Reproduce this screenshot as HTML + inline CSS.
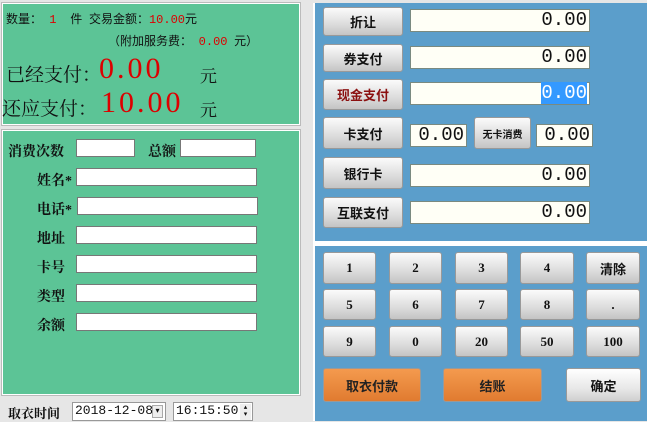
<!DOCTYPE html>
<html><head><meta charset="utf-8"><style>
*{margin:0;padding:0;box-sizing:border-box}
body{width:647px;height:421px;background:#e6e6e6;position:relative;overflow:hidden;font-family:"Liberation Serif","Noto Serif CJK SC",serif;font-size:13px;color:#111}
.a{position:absolute}
.g{background:#5cc496;border:1px solid #fff;box-shadow:0 0 0 1px #bbb}
.b{background:#5b9ecb}
.btn{position:absolute;background:linear-gradient(#fbfbfb,#dcdcdc 60%,#c4c4c4);border:1px solid #999;border-radius:3px;text-align:center;font-weight:bold;font-size:13px;font-family:"Liberation Serif","Noto Sans CJK SC",serif;display:flex;align-items:center;justify-content:center}
.in{position:absolute;background:#fffff6;border:1px solid #7a8a80;text-align:right;font-family:"Liberation Mono","Noto Sans CJK SC",monospace;font-size:19px;line-height:21px;padding-right:2px}
.w{position:absolute;background:#fff;border:1px solid #777}
.r{color:#d00}
.m{font-family:"Liberation Mono",monospace}
.big{font-family:"Liberation Serif",serif;font-size:30px;letter-spacing:3px}
.lb{position:absolute;font-weight:bold;font-size:14px;font-family:"Liberation Serif","Noto Serif CJK SC",serif}
.or{background:linear-gradient(#f49a4e,#e07b30);color:#222}
</style></head><body>
<div class="a g" style="left:2px;top:3px;width:298px;height:122px"></div>
<div class="a" style="left:6px;top:10px;font-size:12px;font-family:'Liberation Sans','Noto Sans CJK SC',sans-serif">数量：<span class="r m">&nbsp;1&nbsp;</span>&nbsp;&nbsp;件&nbsp;&nbsp;交易金额：<span class="r m">10.00</span>元</div>
<div class="a" style="left:108px;top:32px;font-size:12px;font-family:'Liberation Sans','Noto Sans CJK SC',sans-serif">（附加服务费：&nbsp;&nbsp;<span class="r m">0.00</span>&nbsp;&nbsp;元）</div>
<div class="a" style="left:6px;top:60px;font-size:19px">已经支付：</div>
<div class="a r big" style="left:99px;top:52px">0.00</div>
<div class="a" style="left:200px;top:62px;font-size:17px">元</div>
<div class="a" style="left:2px;top:94px;font-size:19px">还应支付：</div>
<div class="a r big" style="left:101px;top:86px">10.00</div>
<div class="a" style="left:200px;top:96px;font-size:17px">元</div>

<div class="a g" style="left:2px;top:130px;width:298px;height:265px"></div>
<div class="lb" style="left:8px;top:141px">消费次数</div>
<div class="w" style="left:76px;top:139px;width:59px;height:18px"></div>
<div class="lb" style="left:148px;top:141px">总额</div>
<div class="w" style="left:180px;top:139px;width:76px;height:18px"></div>
<div class="lb" style="left:37px;top:170px">姓名*</div><div class="w" style="left:76px;top:168px;width:181px;height:18px"></div>
<div class="lb" style="left:37px;top:199px">电话*</div><div class="w" style="left:77px;top:197px;width:181px;height:18px"></div>
<div class="lb" style="left:37px;top:228px">地址</div><div class="w" style="left:76px;top:226px;width:181px;height:18px"></div>
<div class="lb" style="left:37px;top:257px">卡号</div><div class="w" style="left:76px;top:255px;width:181px;height:18px"></div>
<div class="lb" style="left:37px;top:286px">类型</div><div class="w" style="left:76px;top:284px;width:181px;height:18px"></div>
<div class="lb" style="left:37px;top:315px">余额</div><div class="w" style="left:76px;top:313px;width:181px;height:18px"></div>

<div class="lb" style="left:8px;top:403px;font-size:13px">取衣时间</div>
<div class="w" style="left:72px;top:402px;width:94px;height:19px;border-color:#999;font-family:'Liberation Mono',monospace;font-size:13px;padding-left:2px">2018-12-08</div>
<div class="a" style="left:152px;top:405px;width:11px;height:13px;background:#eee;border:1px solid #aaa;font-size:8px;text-align:center">▾</div>
<div class="w" style="left:173px;top:402px;width:80px;height:19px;border-color:#999;font-family:'Liberation Mono',monospace;font-size:13px;padding-left:2px">16:15:50</div>
<div class="a" style="left:240px;top:404px;width:11px;height:16px;font-size:7px;line-height:7px;text-align:center;background:#eee">▴<br>▾</div>

<div class="a b" style="left:313px;top:3px;width:334px;height:238px;border-left:2px solid #fff"></div>
<div class="a" style="left:313px;top:241px;width:334px;height:5px;background:#fff"></div>
<div class="a b" style="left:313px;top:246px;width:334px;height:175px;border-left:2px solid #fff"></div>

<div class="btn" style="left:323px;top:7px;width:80px;height:29px">折让</div>
<div class="in" style="left:410px;top:9px;width:180px;height:23px">0.00</div>
<div class="btn" style="left:323px;top:44px;width:80px;height:28px">券支付</div>
<div class="in" style="left:410px;top:46px;width:180px;height:23px">0.00</div>
<div class="btn" style="left:323px;top:79px;width:80px;height:31px;color:#8b1010">现金支付</div>
<div class="in" style="left:410px;top:82px;width:180px;height:23px"><span style="background:#3399ff;color:#fff">0.00</span></div>
<div class="btn" style="left:323px;top:117px;width:80px;height:32px">卡支付</div>
<div class="in" style="left:410px;top:124px;width:57px;height:23px">0.00</div>
<div class="btn" style="left:474px;top:117px;width:57px;height:32px;font-size:10px">无卡消费</div>
<div class="in" style="left:536px;top:124px;width:57px;height:23px">0.00</div>
<div class="btn" style="left:323px;top:157px;width:80px;height:32px">银行卡</div>
<div class="in" style="left:410px;top:164px;width:180px;height:23px">0.00</div>
<div class="btn" style="left:323px;top:197px;width:80px;height:31px">互联支付</div>
<div class="in" style="left:410px;top:201px;width:180px;height:23px">0.00</div>

<div class="btn" style="left:323px;top:252px;width:53px;height:32px">1</div>
<div class="btn" style="left:389px;top:252px;width:53px;height:32px">2</div>
<div class="btn" style="left:455px;top:252px;width:53px;height:32px">3</div>
<div class="btn" style="left:520px;top:252px;width:54px;height:32px">4</div>
<div class="btn" style="left:586px;top:252px;width:54px;height:32px">清除</div>
<div class="btn" style="left:323px;top:289px;width:53px;height:31px">5</div>
<div class="btn" style="left:389px;top:289px;width:53px;height:31px">6</div>
<div class="btn" style="left:455px;top:289px;width:53px;height:31px">7</div>
<div class="btn" style="left:520px;top:289px;width:54px;height:31px">8</div>
<div class="btn" style="left:586px;top:289px;width:54px;height:31px">.</div>
<div class="btn" style="left:323px;top:326px;width:53px;height:31px">9</div>
<div class="btn" style="left:389px;top:326px;width:53px;height:31px">0</div>
<div class="btn" style="left:455px;top:326px;width:53px;height:31px">20</div>
<div class="btn" style="left:520px;top:326px;width:54px;height:31px">50</div>
<div class="btn" style="left:586px;top:326px;width:54px;height:31px">100</div>
<div class="btn or" style="left:323px;top:368px;width:98px;height:34px">取衣付款</div>
<div class="btn or" style="left:443px;top:368px;width:99px;height:34px">结账</div>
<div class="btn" style="left:566px;top:368px;width:75px;height:34px;background:linear-gradient(#fff,#e8e8e8 60%,#cfcfcf)">确定</div>
</body></html>
